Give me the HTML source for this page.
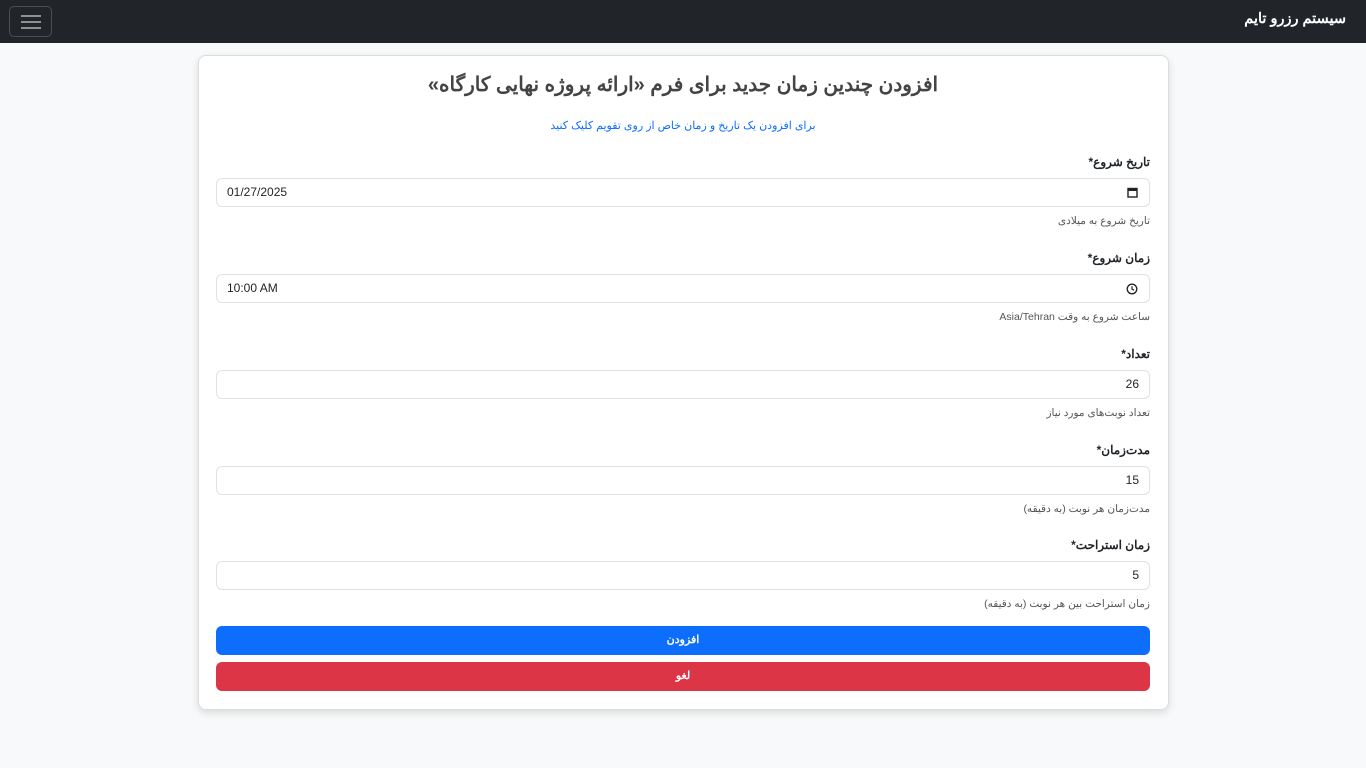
<!DOCTYPE html>
<html><head><meta charset="utf-8"><style>
*{box-sizing:border-box;margin:0;padding:0}
body{width:1366px;height:768px;background:#f8f9fa;font-family:"Liberation Sans","Noto Sans CJK SC",sans-serif;position:relative;overflow:hidden}
.nav{position:absolute;left:0;top:0;width:1366px;height:43px;background:#212529}
.tog{position:absolute;left:9px;top:6px;width:43px;height:31px;border:1px solid #4a4e53;border-radius:5px}
.tog i{position:absolute;left:11px;width:20px;height:2px;background:#8d9196}
.brand{position:absolute;right:20px;top:11px;color:#fff;font-size:14.5px;font-weight:bold;direction:rtl}
.card{position:absolute;left:198px;top:55px;width:971px;height:655px;background:#fff;border:1px solid #ddd;border-radius:8px;box-shadow:0 3px 8px rgba(0,0,0,.12)}
.t{position:absolute;left:0;width:100%;text-align:center;direction:rtl}
.lbl{position:absolute;right:216px;font-size:12px;font-weight:bold;color:#212529;direction:rtl}
.in{position:absolute;left:216px;width:934px;height:29px;border:1px solid #dee2e6;border-radius:6px;background:#fff;font-size:12px;color:#212529;line-height:27px;padding:0 10px}
.help{position:absolute;right:216px;font-size:10.5px;color:#555;direction:rtl}
.btn{position:absolute;left:216px;width:934px;height:29px;border-radius:6px;color:#fff;font-size:11px;font-weight:bold;text-align:center;line-height:29px}
</style></head><body>
<div class="nav"><div class="tog"><i style="top:8px"></i><i style="top:14px"></i><i style="top:20px"></i></div><div class="brand">سیستم رزرو تایم</div></div>
<div class="card"></div>
<div class="t" style="top:72px;font-size:20px;font-weight:bold;color:#444">افزودن چندین زمان جدید برای فرم «ارائه پروژه نهایی کارگاه»</div>
<div class="t" style="top:119px;font-size:11px;color:#0d6efd">برای افزودن یک تاریخ و زمان خاص از روی تقویم کلیک کنید</div>

<div class="lbl" style="top:155px">تاریخ شروع*</div>
<div class="in" style="top:178px">01/27/2025<svg style="position:absolute;right:11px;top:8px" width="11" height="11" viewBox="0 0 11 11"><rect x="1" y="1.5" width="9" height="8.5" fill="none" stroke="#222" stroke-width="1.4"/><rect x="1" y="1.5" width="9" height="2.5" fill="#222"/></svg></div>
<div class="help" style="top:215px">تاریخ شروع به میلادی</div>

<div class="lbl" style="top:251px">زمان شروع*</div>
<div class="in" style="top:274px">10:00 AM<svg style="position:absolute;right:11px;top:8px" width="12" height="12" viewBox="0 0 12 12"><circle cx="6" cy="6" r="4.8" fill="none" stroke="#222" stroke-width="1.3"/><path d="M6 3.2V6l2 1.2" fill="none" stroke="#222" stroke-width="1.2"/></svg></div>
<div class="help" style="top:311px">ساعت شروع به وقت Asia/Tehran</div>

<div class="lbl" style="top:347px">تعداد*</div>
<div class="in" style="top:370px;text-align:right">26</div>
<div class="help" style="top:407px">تعداد نوبت‌های مورد نیاز</div>

<div class="lbl" style="top:443px">مدت‌زمان*</div>
<div class="in" style="top:466px;text-align:right">15</div>
<div class="help" style="top:503px">مدت‌زمان هر نوبت (به دقیقه)</div>

<div class="lbl" style="top:538px">زمان استراحت*</div>
<div class="in" style="top:561px;text-align:right">5</div>
<div class="help" style="top:598px">زمان استراحت بین هر نوبت (به دقیقه)</div>

<div class="btn" style="top:626px;background:#0d6efd">افزودن</div>
<div class="btn" style="top:662px;background:#dc3545">لغو</div>
</body></html>
